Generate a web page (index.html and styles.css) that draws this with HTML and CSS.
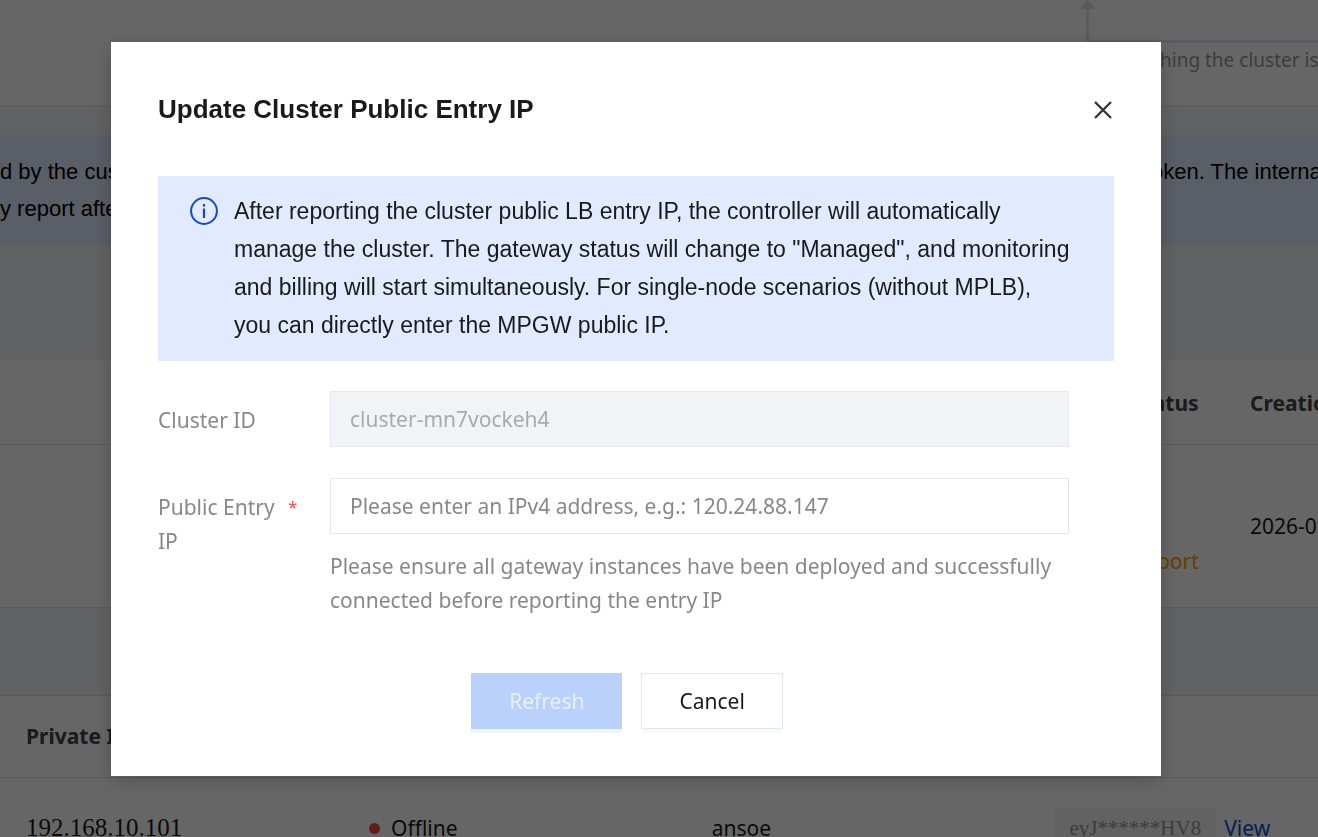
FILE: index.html
```
<!DOCTYPE html>
<html lang="en">
<head>
<meta charset="utf-8">
<title>Update Cluster Public Entry IP</title>
<link rel="stylesheet" href="styles.css">
</head>
<body>
<main class="page">
  <section class="flow">
    <div class="flow-step">
      <svg class="flow-arrow" viewBox="0 0 238 43" aria-hidden="true">
        <path d="M0 9 7.500-1l7.500 10z" fill="#dfe1ec"/>
        <path d="M7.500 5v34q0 2.500 2.500 2.500H238" fill="none" stroke="#dfe1ec" stroke-width="2.700"/>
      </svg>
      <p class="flow-text">hing the cluster is</p>
    </div>
  </section>
  <section class="notice">
    <p class="notice-start">d by the cust<br>y report after</p>
    <p class="notice-end">oken. The interna</p>
  </section>
  <table class="grid clusters">
    <thead><tr><th></th><th class="status">Status</th><th class="created">Creatio</th></tr></thead>
    <tbody><tr><td></td><td class="status"><a class="report" href="#">Report</a></td><td class="created">2026-0</td></tr></tbody>
  </table>
  <table class="grid nodes">
    <thead><tr><th>Private IP</th><th></th><th></th><th></th></tr></thead>
    <tbody><tr>
      <td><span class="address">192.168.10.101</span></td>
      <td><span class="state">Offline</span></td>
      <td>ansoe</td>
      <td><span class="token-cell"><code class="token">eyJ******HV8</code><a class="view" href="#">View</a></span></td>
    </tr></tbody>
  </table>
</main>
<div class="overlay">
  <form class="dialog" role="dialog" aria-modal="true" aria-labelledby="dialog-title">
    <header class="dialog-head">
      <h1 class="dialog-title" id="dialog-title">Update Cluster Public Entry IP</h1>
      <button class="close" type="button" aria-label="Close">
        <svg viewBox="0 0 22 22" width="22" height="22" aria-hidden="true"><path d="m3 4 16 16m0-16L3 20" fill="none" stroke="#333" stroke-width="2.300"/></svg>
      </button>
    </header>
    <div class="alert">
      <svg class="alert-icon" viewBox="0 0 28 28" width="28" height="28" aria-hidden="true">
        <circle cx="14" cy="14" r="12.900" fill="none" stroke="#1447c0" stroke-width="2"/>
        <path d="M12.900 7h2.200v2.400h-2.200zM12.900 11.500h2.200V21h-2.200z" fill="#1447c0"/>
      </svg>
      <p class="alert-text">After reporting the cluster public LB entry IP, the controller will automatically manage the cluster. The gateway status will change to "Managed", and monitoring and billing will start simultaneously. For single-node scenarios (without MPLB), you can directly enter the MPGW public IP.</p>
    </div>
    <div class="fields">
      <label class="label" for="cluster-id">Cluster ID</label>
      <input class="input" id="cluster-id" type="text" value="cluster-mn7vockeh4" disabled>
      <label class="label" for="entry-ip"><span class="label-text">Public Entry IP</span><span class="required">*</span></label>
      <div class="field">
        <input class="input" id="entry-ip" type="text" placeholder="Please enter an IPv4 address, e.g.: 120.24.88.147" aria-describedby="entry-hint">
        <p class="hint" id="entry-hint">Please ensure all gateway instances have been deployed and successfully connected before reporting the entry IP</p>
      </div>
    </div>
    <footer class="actions">
      <button class="button primary" type="submit" disabled>Refresh</button>
      <button class="button" type="button">Cancel</button>
    </footer>
  </form>
</div>
</body>
</html>
```
FILE: styles.css
```
* { box-sizing: border-box; }
body {
  margin: 0;
  height: 100vh;
  overflow: hidden;
  color: #1a1a1a;
  font: 21px/34px "Noto Sans", "Segoe UI", sans-serif;
}
p, h1 { margin: 0; }
a { text-decoration: none; }

.page { height: 100%; overflow: hidden; background: #f3f4f7; }
.flow {
  display: flex;
  justify-content: flex-end;
  height: 107px;
  background: #fff;
  border-bottom: 2px solid #ecedf0;
}
.flow-step { width: 238px; }
.flow-arrow { display: block; width: 238px; height: 43px; }
.flow-text { padding-left: 80px; color: #999; font-size: 19px; white-space: nowrap; }
.notice {
  display: flex;
  justify-content: space-between;
  height: 111px;
  margin: 28px 0 115px;
  padding-top: 18px;
  background: #e1eaff;
  color: #000;
  font: 22px/37px "Liberation Sans", Arial, sans-serif;
  white-space: nowrap;
}
.notice-end { width: 167px; }

.grid { width: 100%; border-collapse: collapse; table-layout: fixed; background: #fff; }
.grid th, .grid td { padding: 0; text-align: left; white-space: nowrap; }
.grid th { height: 83px; border-bottom: 1px solid #e0e2e8; color: #444; }
.clusters { margin-bottom: 87px; border-bottom: 1px solid #e0e2e8; }
.clusters th { padding-top: 2px; }
.clusters td { height: 163px; }
.clusters .status { width: 118px; }
.clusters .created { width: 68px; }
.clusters td.status { padding-top: 70px; }
.report { color: #ff9d00; }
.nodes { border-top: 1px solid #e0e2e8; }
.nodes th { width: 26%; height: 82px; }
.nodes th:first-child, .nodes td:first-child { padding-left: 26px; }
.nodes th:first-child { width: 28%; }
.nodes th:last-child { width: 20%; }
.nodes td { height: 102px; }
.address, .state, .token-cell { display: flex; align-items: center; height: 34px; }
.address { font: 25px/34px "Liberation Serif", serif; }
.state { gap: 11px; }
.state::before { width: 11px; height: 11px; border-radius: 50%; background: #f54a45; content: ""; }
.token-cell { gap: 8px; }
.token {
  padding: 3px 15px;
  border-radius: 3px;
  background: #f5f5f5;
  color: #999;
  font: 21px/34px "Liberation Serif", serif;
}
.view { color: #0052d9; }

.overlay {
  position: fixed;
  inset: 0;
  display: flex;
  align-items: flex-start;
  justify-content: center;
  padding: 42px 46px 0 0;
  background: rgb(0 0 0 / 60%);
}
.dialog {
  width: 1050px;
  max-width: 100%;
  padding: 47px;
  background: #fff;
  box-shadow: 0 4px 20px rgb(0 0 0 / 20%);
}
.dialog-head { display: flex; align-items: center; justify-content: space-between; height: 40px; margin-bottom: 47px; }
.dialog-title { font: bold 26px/40px "Liberation Sans", Arial, sans-serif; }
.close { display: flex; padding: 0; border: 0; background: none; }
.alert { display: flex; gap: 16px; padding: 16px 32px 17px; background: #e1eaff; }
.alert-icon { flex: none; margin-top: 5px; }
.alert-text { max-width: 838px; font: 23px/38px "Liberation Sans", Arial, sans-serif; }
.fields {
  display: grid;
  grid-template-columns: 142px 739px;
  gap: 31px 30px;
  margin-top: 30px;
  color: #888;
}
.label { display: flex; gap: 8px; padding-top: 12px; }
.label-text { width: 122px; }
.required { color: #f54a45; font-size: 17px; }
.input {
  display: block;
  width: 100%;
  height: 56px;
  padding: 0 19px;
  border: 1px solid #e5e7f0;
  border-radius: 0;
  background: #fff;
  font: inherit;
}
.input:disabled { background: #f2f3f7; color: #aaa; }
.input::placeholder { color: #888; opacity: 1; }
.hint { padding-top: 15px; }
.actions { display: flex; gap: 19px; justify-content: center; margin-top: 56px; padding-right: 18px; }
.button {
  height: 56px;
  padding: 0 37px;
  border: 1px solid #e5e7f0;
  background: #fff;
  box-shadow: 0 4px 0 #fafafc;
  color: #1a1a1a;
  font: inherit;
}
.primary { border-color: #bad1fb; background: #bad1fb; box-shadow: 0 4px 0 #f2f6fe; color: #e8f0fe; }
```
